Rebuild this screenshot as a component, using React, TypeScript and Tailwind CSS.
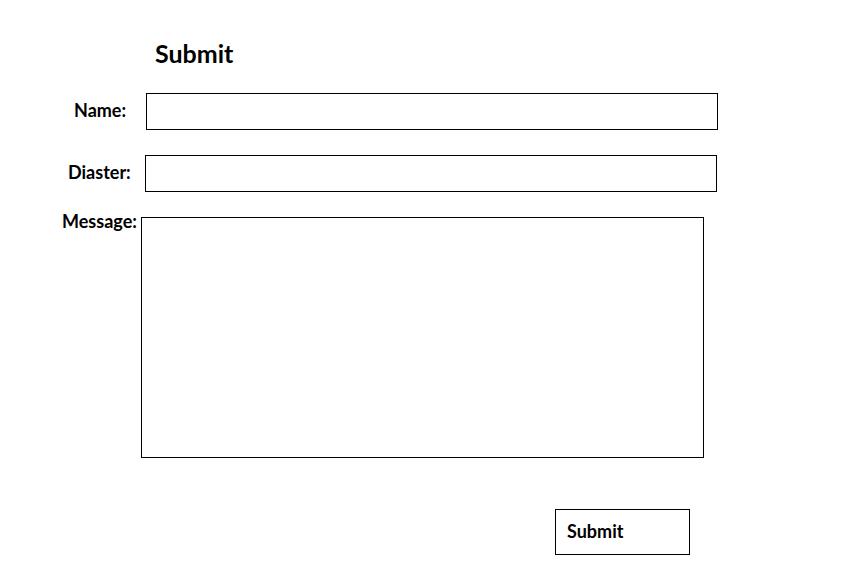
function App() {
  return (
    <div
      className="w-[849px] h-[567px] bg-white text-black font-bold relative"
      style={{ fontFamily: "Lato, 'Open Sans', sans-serif" }}
    >
      <div className="pt-[38px] pl-[155px] text-[25px] leading-[30px]">Submit</div>

      <div className="mt-[25px] flex items-center">
        <label className="ml-[74px] w-[72px] -mt-[3px] text-[18px] leading-[22px]">Name:</label>
        <input type="text" className="w-[572px] h-[37px] border border-black outline-none" />
      </div>

      <div className="mt-[25px] flex items-center">
        <label className="ml-[68px] w-[77px] -mt-[3px] text-[18px] leading-[22px]">Diaster:</label>
        <input type="text" className="w-[572px] h-[37px] border border-black outline-none" />
      </div>

      <div className="mt-[25px] flex items-start">
        <label className="ml-[62px] w-[79px] -mt-[7px] text-[18px] leading-[22px]">Message:</label>
        <textarea className="w-[563px] h-[241px] border border-black outline-none resize-none" />
      </div>

      <div className="mt-[51px] pl-[555px]">
        <button className="w-[135px] h-[46px] border border-black text-left pl-[11px] pb-[2px] text-[18px]">
          Submit
        </button>
      </div>
    </div>
  );
}

export default App;
